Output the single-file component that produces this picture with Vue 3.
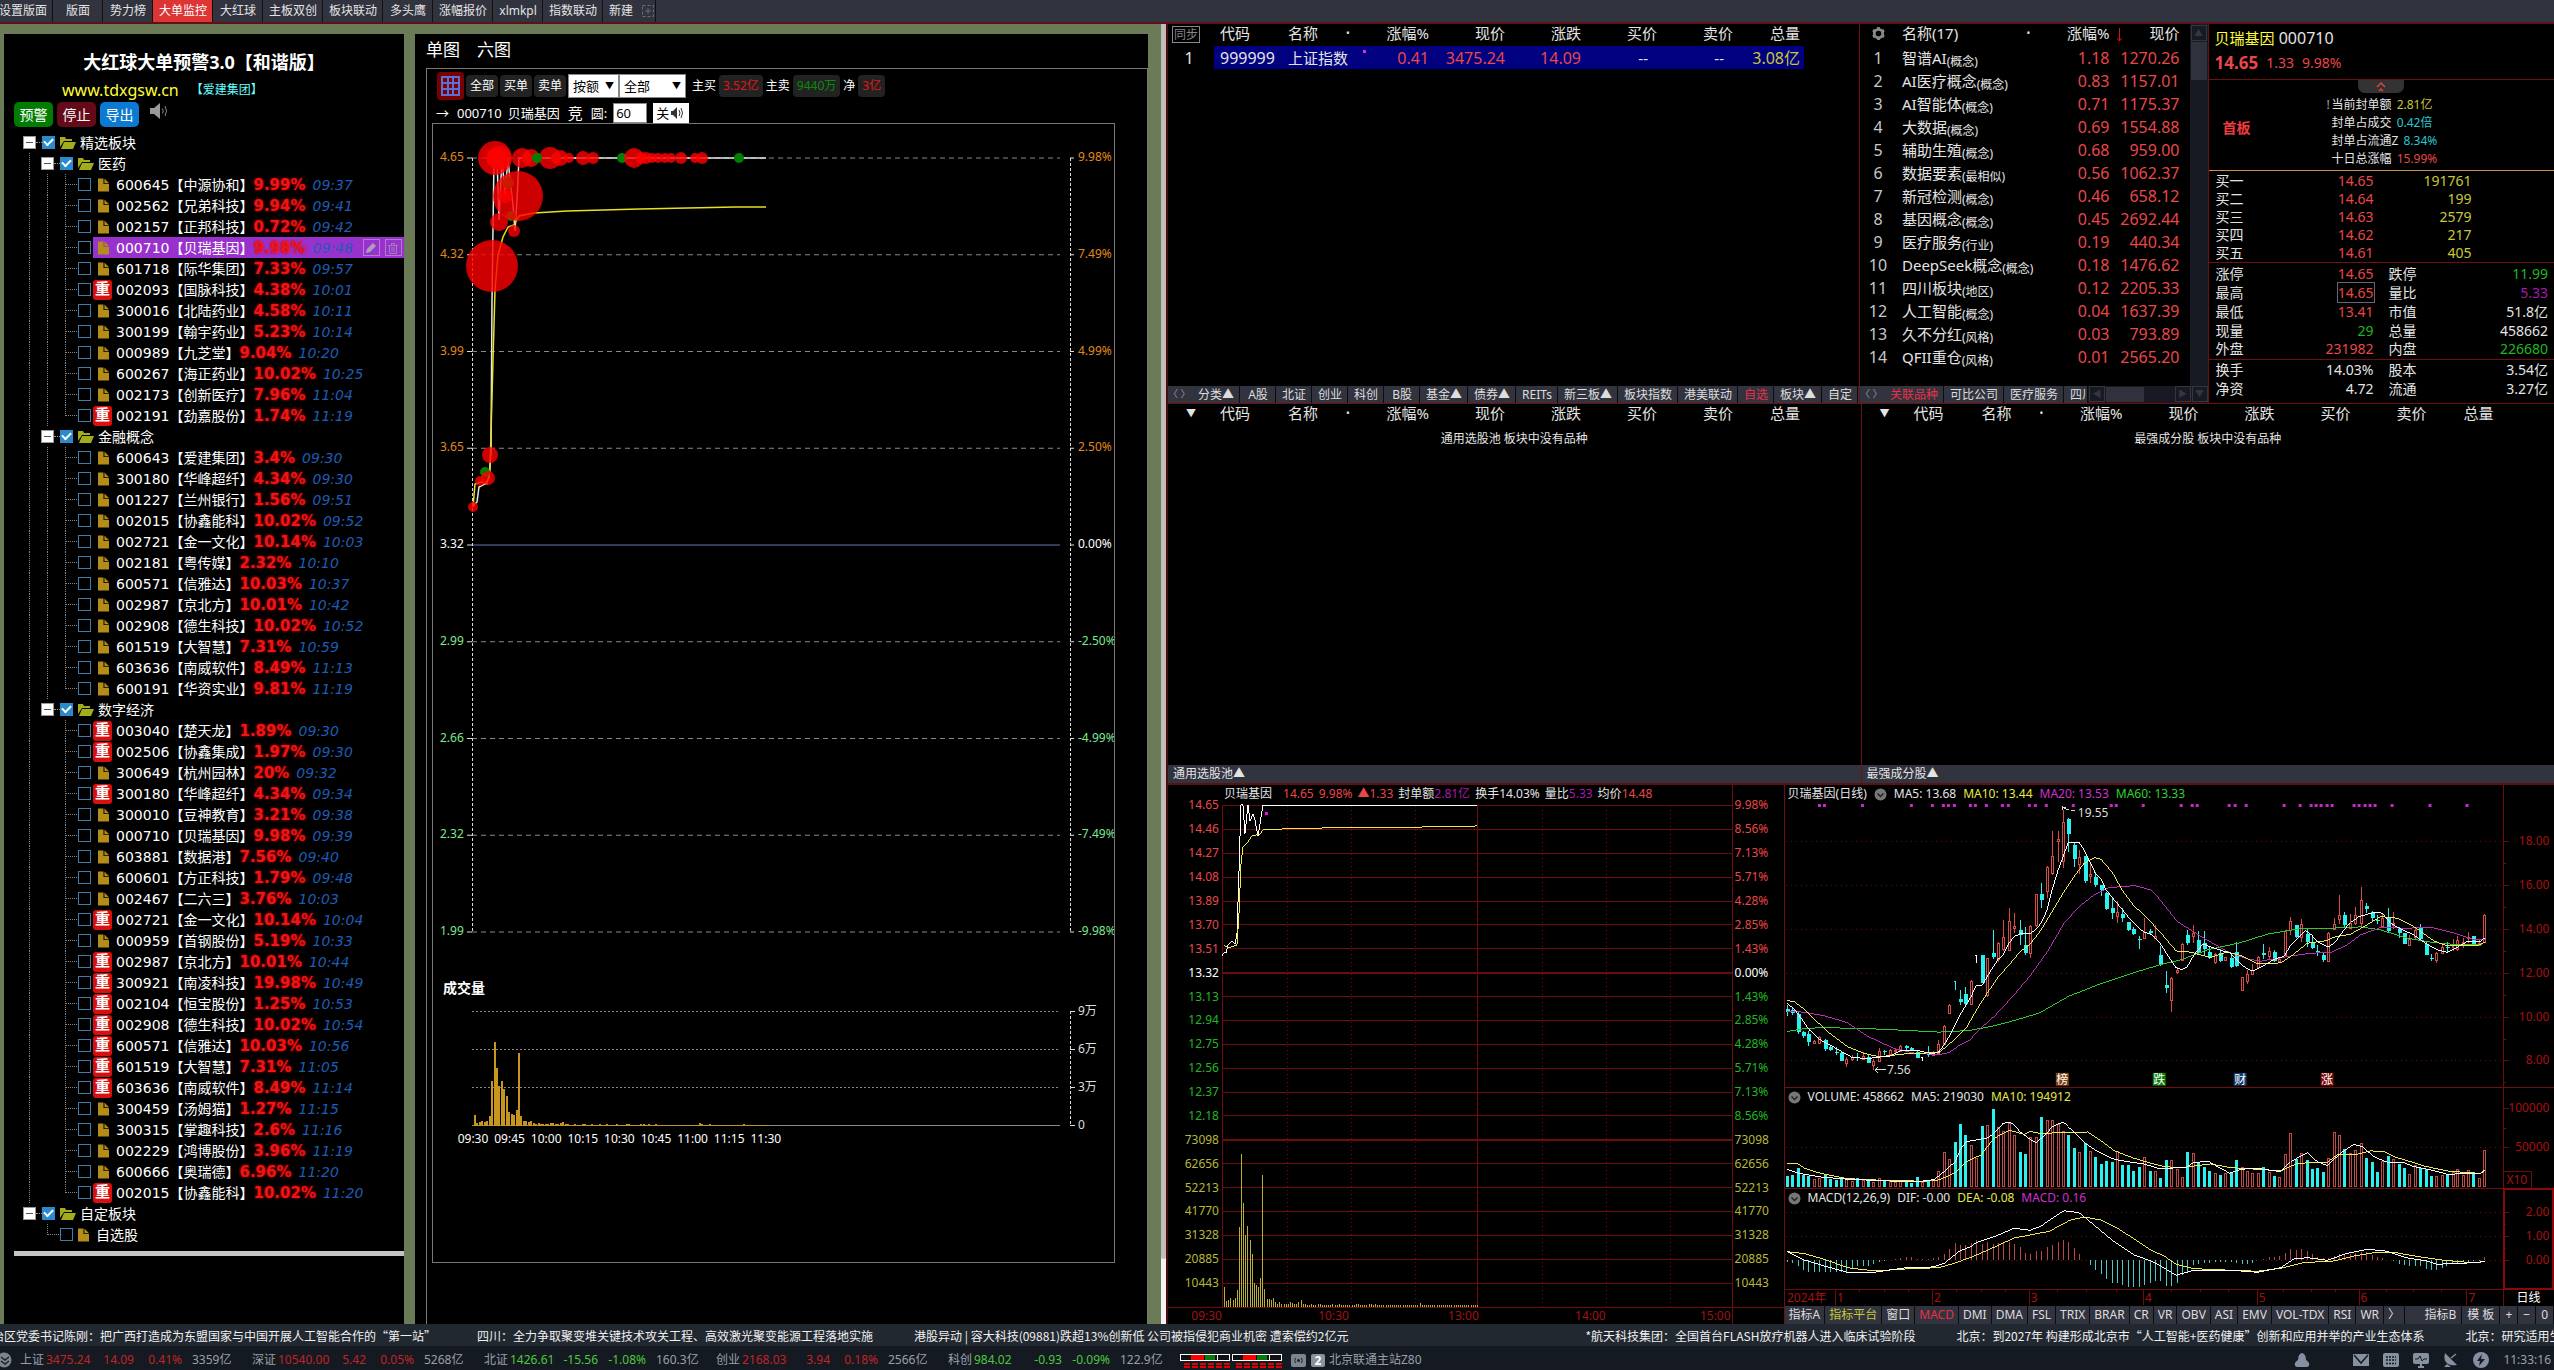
<script setup>
const layoutTabs = ['设置版面', '版面', '势力榜', '大单监控', '大红球', '主板双创', '板块联动', '多头鹰', '涨幅报价', 'xlmkpl', '指数联动']

// A leading * marks a stock that has been flagged before.
const parse = (s) => s.trim().split('\n').map((l) => {
  const [code, name, pct, time] = l.trim().split(' ')
  return { dup: code[0] === '*', code: code.replace('*', ''), name, pct, time }
})
const groups = [
  { name: '医药', items: parse(`600645 中源协和 9.99% 09:37
    002562 兄弟科技 9.94% 09:41
    002157 正邦科技 0.72% 09:42
    000710 贝瑞基因 9.98% 09:48
    601718 际华集团 7.33% 09:57
    *002093 国脉科技 4.38% 10:01
    300016 北陆药业 4.58% 10:11
    300199 翰宇药业 5.23% 10:14
    000989 九芝堂 9.04% 10:20
    600267 海正药业 10.02% 10:25
    002173 创新医疗 7.96% 11:04
    *002191 劲嘉股份 1.74% 11:19`) },
  { name: '金融概念', items: parse(`600643 爱建集团 3.4% 09:30
    300180 华峰超纤 4.34% 09:30
    001227 兰州银行 1.56% 09:51
    002015 协鑫能科 10.02% 09:52
    002721 金一文化 10.14% 10:03
    002181 粤传媒 2.32% 10:10
    600571 信雅达 10.03% 10:37
    002987 京北方 10.01% 10:42
    002908 德生科技 10.02% 10:52
    601519 大智慧 7.31% 10:59
    603636 南威软件 8.49% 11:13
    600191 华资实业 9.81% 11:19`) },
  { name: '数字经济', items: parse(`*003040 楚天龙 1.89% 09:30
    *002506 协鑫集成 1.97% 09:30
    300649 杭州园林 20% 09:32
    *300180 华峰超纤 4.34% 09:34
    300010 豆神教育 3.21% 09:38
    000710 贝瑞基因 9.98% 09:39
    603881 数据港 7.56% 09:40
    600601 方正科技 1.79% 09:48
    002467 二六三 3.76% 10:03
    *002721 金一文化 10.14% 10:04
    000959 首钢股份 5.19% 10:33
    *002987 京北方 10.01% 10:44
    *300921 南凌科技 19.98% 10:49
    *002104 恒宝股份 1.25% 10:53
    *002908 德生科技 10.02% 10:54
    *600571 信雅达 10.03% 10:56
    *601519 大智慧 7.31% 11:05
    *603636 南威软件 8.49% 11:14
    300459 汤姆猫 1.27% 11:15
    300315 掌趣科技 2.6% 11:16
    002229 鸿博股份 3.96% 11:19
    600666 奥瑞德 6.96% 11:20
    *002015 协鑫能科 10.02% 11:20`) },
]

const bigAxis = [
  ['4.65', '9.98%', 'o'], ['4.32', '7.49%', 'o'], ['3.99', '4.99%', 'o'], ['3.65', '2.50%', 'o'], ['3.32', '0.00%', 'w'],
  ['2.99', '-2.50%', 'g'], ['2.66', '-4.99%', 'g'], ['2.32', '-7.49%', 'g'], ['1.99', '-9.98%', 'g'],
].map(([p, r, c], i) => ({ p, r, c, y: 158 + i * 96.75 }))
const bigVolAxis = [['9万', 1011], ['6万', 1049], ['3万', 1087], ['0', 1125]]
const bigTimes = ['09:30', '09:45', '10:00', '10:15', '10:30', '10:45', '11:00', '11:15', '11:30']
const bubbles = [
  [495, 158, 17], [499, 158, 12], [496, 158, 10], [522, 158, 10], [531, 158, 9], [550, 158, 11], [560, 158, 8], [569, 158, 5],
  [583, 158, 7], [593, 158, 6], [634, 158, 10], [641, 158, 6], [646, 158, 6], [652, 158, 5], [658, 158, 5], [665, 158, 5], [671, 158, 5],
  [681, 158, 6], [695, 158, 5], [702, 158, 6], [518, 196, 25], [505, 196, 7], [499, 222, 9], [514, 231, 6], [492, 266, 26],
  [490, 455, 8], [488, 478, 7], [480, 481, 5], [473, 507, 5],
]
const greens = [[537, 158, 5], [527, 158, 5], [622, 158, 5], [556, 158, 5], [739, 158, 5], [485, 472, 5], [508, 183, 6], [511, 216, 5]]

const vol = [51, 14, 18, 23, 18, 23, 44, 206, 393, 267, 183, 208, 172, 136, 62, 56, 50, 74, 339, 46, 19, 19, 16, 23, 11, 6, 13, 7, 8, 8, 8, 12, 10, 8, 7, 13, 18, 6, 6, 4,
  4, 6, 3, 3, 6, 6, 3, 3, 5, 3, 4, 6, 3, 4, 6, 4, 3, 3, 5, 3, 3, 4, 8, 8, 3, 3, 4, 3, 8, 6, 4, 6, 4, 3, 5, 3, 3, 4, 3, 3,
  3, 3, 4, 3, 3, 3, 4, 3, 3, 3, 3, 3, 10, 5, 3, 4, 5, 3, 3, 3, 4, 3, 3, 3, 3, 4, 3, 3, 3, 3, 5, 3, 3, 3, 3, 3, 3, 3, 3, 4]

const poolHead = ['代码', '名称', '涨幅%', '现价', '涨跌', '买价', '卖价', '总量']
const marketTabs = ['分类▲', 'A股', '北证', '创业', '科创', 'B股', '基金▲', '债券▲', 'REITs', '新三板▲', '板块指数', '港美联动', '自选', '板块▲', '自定']
const sectors = [
  ['智谱AI', '概念', '1.18', '1270.26'], ['AI医疗概念', '概念', '0.83', '1157.01'], ['AI智能体', '概念', '0.71', '1175.37'],
  ['大数据', '概念', '0.69', '1554.88'], ['辅助生殖', '概念', '0.68', '959.00'], ['数据要素', '最相似', '0.56', '1062.37'],
  ['新冠检测', '概念', '0.46', '658.12'], ['基因概念', '概念', '0.45', '2692.44'], ['医疗服务', '行业', '0.19', '440.34'],
  ['DeepSeek概念', '概念', '0.18', '1476.62'], ['四川板块', '地区', '0.12', '2205.33'], ['人工智能', '概念', '0.04', '1637.39'],
  ['久不分红', '风格', '0.03', '793.89'], ['QFII重仓', '风格', '0.01', '2565.20'],
]
const sealStats = [['当前封单额', '2.81亿', 'y'], ['封单占成交', '0.42倍', 'c'], ['封单占流通Z', '8.34%', 'c'], ['十日总涨幅', '15.99%', 'r']]
const bids = [['买一', '14.65', '191761'], ['买二', '14.64', '199'], ['买三', '14.63', '2579'], ['买四', '14.62', '217'], ['买五', '14.61', '405']]
const stats = [
  ['涨停', '14.65', 'r', '跌停', '11.99', 'g'], ['最高', '14.65', 'r boxed', '量比', '5.33', 'm'], ['最低', '13.41', 'r', '市值', '51.8亿', 'w'],
  ['现量', '29', 'g', '总量', '458662', 'w'], ['外盘', '231982', 'r', '内盘', '226680', 'g'],
]
const stats2 = [['换手', '14.03%', 'w', '股本', '3.54亿', 'w'], ['净资', '4.72', 'w', '流通', '3.27亿', 'w']]

const intraLeft = ['14.65', '14.46', '14.27', '14.08', '13.89', '13.70', '13.51', '13.32', '13.13', '12.94', '12.75', '12.56', '12.37', '12.18', '73098', '62656', '52213', '41770', '31328', '20885', '10443']
const intraRight = ['9.98%', '8.56%', '7.13%', '5.71%', '4.28%', '2.85%', '1.43%', '0.00%', '1.43%', '2.85%', '4.28%', '5.71%', '7.13%', '8.56%']
const intraAxis = intraLeft.map((l, i) => ({ l, r: intraRight[i] || l, y: 805.5 + i * 23.9, c: i < 7 ? 'r' : i === 7 ? 'w' : i < 14 ? 'g' : 'y' }))
const intraDots = [1287.5, 1351.5, 1415.5, 1542.5, 1606.5, 1670.5]
const intraTimes = [['09:30', 1222], ['10:30', 1349], ['13:00', 1479], ['14:00', 1606], ['15:00', 1731]]

// Daily chart: coordinates are kept in thirds of a pixel from the plot origin.
const X = (v) => 1780 + v / 3
const Y = (v) => 780 + v / 3
const line = (s) => s.split(' ').map((p) => { const [a, b] = p.split(','); return X(+a).toFixed(1) + ',' + Y(+b).toFixed(1) }).join(' ')
const cx = (i) => Math.floor(1786.3 + 5.414 * i) + 0.5
const candles = `d675,687,697,708 d682,690,700,706 d695,703,756,762 d752,757,768,775 d752,762,786,798 u779,784,789,793 u768,772,788,790 d778,781,806,812 d795,801,809,812 d802,815,817,825 d812,819,842,843 u830,838,850,860 u825,830,838,842 d818,830,832,842 u815,827,838,841 d826,832,849,850 u838,844,854,870 u804,812,842,844 d810,814,817,825 u808,811,822,824 u806,809,814,818 u795,799,812,815 d795,798,803,810 d800,804,812,814 d810,815,833,834 w832,832,832,842 d798,820,826,832 u812,815,826,828 u780,792,820,826 u735,737,791,793 u672,674,698,702 t604,604,604,630 d630,657,666,675 d620,643,671,678 u600,602,673,675 w526,526,526,549 d525,525,608,610 u533,535,645,650 d450,518,530,537 u486,488,536,545 u420,472,508,514 u385,423,510,512 u398,438,443,458 d420,450,465,495 d440,495,519,526 u435,437,520,533 u341,343,435,440 d310,341,360,384 u258,260,332,355 u153,229,280,284 u153,178,184,246 u90,127,242,263 d113,117,162,216 d185,195,237,262 u210,232,252,282 d228,228,303,308 u250,283,289,310 d275,291,315,322 d315,316,330,348 d337,339,387,390 d350,384,398,418 u362,397,409,428 d385,402,413,425 d425,425,450,452 d440,447,463,466 d468,477,480,507 u415,457,474,478 d448,452,459,463 u435,468,474,478 d498,525,555,558 d573,614,625,638 u590,595,660,695 u560,570,576,582 u490,493,540,542 d450,465,489,496 u435,459,467,488 d452,480,519,525 d452,490,508,525 d500,516,535,538 u520,523,545,551 d508,518,543,545 u530,532,540,542 d522,535,561,564 d486,516,558,561 u590,592,629,631 u570,583,602,612 u551,570,583,586 u528,530,561,566 d492,520,524,538 u500,514,528,540 d510,516,544,547 u533,537,543,546 u450,452,524,526 u410,424,450,465 d435,436,470,474 u417,433,470,486 d448,461,485,500 d470,487,504,508 d495,512,520,528 d515,525,541,546 u456,458,542,544 u415,432,446,449 u345,406,416,432 d396,404,436,442 u402,430,445,448 u380,405,430,435 u321,360,428,440 d369,377,387,398 d393,396,414,424 d405,419,424,432 u398,414,437,440 d384,414,453,460 u396,430,434,448 d440,444,460,474 d458,460,491,492 u465,478,494,496 u445,450,470,478 d432,445,477,482 d485,492,524,526 d522,535,538,543 u515,518,541,549 u496,500,518,521 d485,500,504,518 u477,492,502,512 u468,480,508,513 u475,485,488,505 u456,470,474,490 d467,468,495,497 u480,490,494,498 u402,404,485,487`
  .split(' ').map((s, i) => { const [h, t, b, l] = s.slice(1).split(',').map((n) => Math.round(Y(+n))); return { k: s[0], x: cx(i), h, t, b, l } })
const dayVol = [1187, 1185, 1163, 1185, 1188, 1197, 1194, 1183, 1197, 1201, 1197, 1193, 1202, 1194, 1201, 1199, 1205, 1194, 1203, 1203, 1206, 1204, 1205, 1208, 1191, 1207, 1203, 1200, 1173, 1117, 1138, 1086, 1032, 1065, 1095, 1134, 1038, 1036, 987, 1040, 1052, 1028, 1066, 1116, 1121, 1072, 1070, 1011, 1020, 1020, 1032, 1052, 1065, 1104, 1117, 1089, 1114, 1131, 1152, 1144, 1146, 1113, 1155, 1155, 1173, 1161, 1130, 1173, 1173, 1194, 1140, 1141, 1167, 1192, 1116, 1120, 1148, 1161, 1173, 1180, 1186, 1178, 1180, 1140, 1160, 1173, 1179, 1180, 1160, 1177, 1188, 1192, 1123, 1060, 1138, 1120, 1141, 1167, 1164, 1176, 1135, 1057, 1066, 1107, 1120, 1110, 1090, 1134, 1147, 1176, 1144, 1128, 1136, 1152, 1164, 1183, 1154, 1165, 1167, 1188, 1189, 1184, 1186, 1175, 1168, 1186, 1171, 1179, 1195, 1110]
  .map((v, i) => ({ x: cx(i), y: Math.round(Y(v)), up: 'uw'.includes(candles[i].k) }))
const macd = [-4, -8, -18, -28, -34, -34, -34, -34, -34, -34, -34, -34, -26, -18, -17, -17, -12, -5, -1, 0, 4, 8, 10, 9, 5, 4, 4, 7, 10, 18, 34, 52, 47, 45, 52, 60, 50, 55, 50, 52, 54, 55, 49, 40, 22, 20, 28, 27, 40, 45, 54, 60, 55, 36, 18, 0, -14, -28, -40, -55, -67, -68, -75, -79, -79, -79, -75, -68, -61, -62, -76, -76, -67, -45, -34, -14, -10, -8, -7, -4, -4, -4, -4, -7, -10, -10, -8, 0, 4, 9, 10, 12, 23, 34, 32, 34, 28, 18, 10, 6, 8, 14, 20, 18, 18, 22, 25, 24, 15, 10, 6, 1, -3, -10, -14, -18, -16, -18, -26, -28, -28, -24, -16, -10, -7, -6, -4, -3, -3, 9]
  .map((v, i) => ({ x: cx(i), v, y: Y(1441 - v) }))
const ma5 = line('19,672 37,685 52,703 85,750 118,780 166,806 214,833 262,836 295,832 328,829 361,812 409,812 457,822 475,815 490,795 505,770 538,705 571,650 586,617 604,616 619,590 652,538 667,525 685,490 700,470 718,462 748,462 766,447 781,430 799,390 814,330 832,270 847,230 862,188 895,187 913,215 943,278 961,297 976,330 1009,370 1042,410 1075,445 1090,457 1110,463 1135,485 1160,525 1186,563 1202,569 1220,560 1240,525 1267,492 1300,505 1350,520 1390,560 1414,574 1445,560 1480,538 1510,530 1528,500 1560,465 1576,452 1593,465 1610,485 1645,502 1665,485 1690,450 1710,428 1735,410 1786,396 1805,400 1830,430 1860,447 1900,465 1930,487 1970,510 2000,517 2030,502 2060,485 2100,485 2113,474')
const ma10 = line('19,663 37,664 60,680 100,718 148,762 199,800 247,820 295,831 376,822 475,818 520,780 556,745 586,692 619,640 652,592 685,555 718,515 748,493 781,450 814,395 847,340 880,290 910,250 943,233 961,238 995,278 1024,330 1060,378 1090,405 1123,440 1150,470 1186,513 1230,517 1290,533 1340,516 1380,527 1430,552 1500,549 1530,530 1580,490 1640,482 1660,472 1710,463 1750,440 1800,410 1850,415 1900,440 1960,483 2000,498 2090,498 2113,487')
const ma20 = line('19,695 70,697 130,708 199,728 262,770 340,806 400,820 475,824 505,818 538,795 565,782 600,745 640,710 700,645 748,588 800,515 850,430 895,380 940,345 985,323 1062,317 1110,330 1130,350 1190,425 1270,475 1340,515 1400,537 1440,544 1520,530 1590,520 1650,518 1700,495 1740,465 1800,443 1880,445 1950,442 2010,457 2060,474 2085,480 2113,478')
const ma60 = line('19,755 70,746 130,743 230,746 300,748 475,757 565,752 640,738 700,722 775,700 862,650 950,615 1060,578 1140,554 1200,540 1280,510 1380,488 1460,463 1560,446 1650,445 1740,441 1800,450 1880,475 1960,488 2030,494 2100,494 2113,487')
const vma5 = line('19,1168 52,1180 118,1191 199,1198 300,1202 394,1206 430,1203 460,1199 490,1175 523,1145 538,1110 556,1085 619,1074 637,1062 667,1030 685,1027 700,1034 718,1056 748,1078 766,1088 799,1060 814,1040 845,1027 862,1040 895,1072 913,1090 943,1110 1000,1138 1060,1148 1090,1152 1138,1167 1190,1163 1215,1163 1240,1147 1285,1145 1310,1160 1347,1180 1380,1168 1430,1165 1500,1175 1530,1145 1580,1118 1610,1145 1640,1157 1680,1120 1720,1093 1745,1100 1780,1130 1820,1147 1870,1148 1900,1160 1960,1172 2000,1183 2100,1180 2113,1172')
const vma10 = line('19,1152 52,1152 70,1165 118,1180 199,1196 300,1201 430,1204 475,1200 523,1178 556,1145 600,1125 640,1075 685,1051 730,1063 748,1054 775,1060 860,1058 920,1056 961,1082 1000,1112 1060,1135 1110,1150 1150,1160 1200,1163 1290,1152 1350,1163 1430,1168 1500,1173 1550,1150 1640,1147 1670,1125 1730,1123 1770,1113 1810,1114 1840,1130 1890,1145 1930,1158 2000,1173 2060,1178 2100,1180 2113,1170')
const dif = line('19,1415 70,1440 130,1458 199,1477 280,1477 376,1463 457,1461 490,1450 538,1412 571,1400 586,1388 640,1370 700,1345 748,1351 781,1338 814,1315 850,1292 895,1298 940,1335 1000,1385 1060,1425 1110,1443 1140,1458 1186,1486 1240,1471 1350,1471 1430,1477 1500,1463 1540,1437 1580,1433 1640,1441 1700,1420 1760,1408 1820,1414 1880,1434 1940,1443 1970,1453 2040,1450 2090,1448 2113,1443')
const dea = line('19,1415 70,1421 130,1438 199,1463 280,1473 376,1467 475,1463 520,1450 571,1432 640,1402 700,1374 800,1355 862,1322 910,1311 960,1320 1010,1345 1062,1378 1110,1410 1150,1428 1186,1453 1240,1466 1350,1471 1430,1474 1500,1465 1570,1448 1660,1443 1720,1428 1780,1418 1850,1419 1920,1431 1990,1441 2060,1447 2090,1449 2113,1444')
const newsDots = [115, 130, 244, 391, 454, 487, 502, 520, 568, 583, 616, 664, 682, 745, 763, 796, 877, 991, 1006, 1087, 1201, 1234, 1249, 1345, 1363, 1396, 1510, 1558, 1591, 1606, 1621, 1639, 1654, 1720, 1735, 1753, 1768, 1783, 1834, 1948, 2059].map((v) => Math.round(X(v)) - 1)
const priceAxis = ['18.00', '16.00', '14.00', '12.00', '10.00', '8.00'].map((t, i) => ({ t, y: Math.round(841.3 + i * 43.8) + 0.5 }))
const marks = [['榜', 2055, '#7a420e'], ['跌', 2152, '#0a7a0a'], ['财', 2233, '#12396b'], ['涨', 2320, '#7a0c0c']]
const months = [['1', 1834], ['2', 1931], ['3', 2028], ['4', 2142], ['5', 2256], ['6', 2358], ['7', 2466]]
const shortTicks = [1858, 1883, 1907, 1955, 1980, 2004, 2056, 2085, 2115, 2170, 2199, 2227, 2282, 2310, 2334, 2385, 2412, 2440]
const indTabs = ['指标A', '指标平台', '窗口', 'MACD', 'DMI', 'DMA', 'FSL', 'TRIX', 'BRAR', 'CR', 'VR', 'OBV', 'ASI', 'EMV', 'VOL-TDX', 'RSI', 'WR', '〉']
const indTabsRight = ['指标B', '模 板', '+', '−', '0']

const news = [
  '治区党委书记陈刚：把广西打造成为东盟国家与中国开展人工智能合作的“第一站”',
  '四川：全力争取聚变堆关键技术攻关工程、高效激光聚变能源工程落地实施',
  '港股异动 | 容大科技(09881)跌超13%创新低 公司被指侵犯商业机密 遭索偿约2亿元',
  '*航天科技集团：全国首台FLASH放疗机器人进入临床试验阶段',
  '北京：到2027年 构建形成北京市“人工智能+医药健康”创新和应用并举的产业生态体系',
  '北京：研究适用生',
]
const indices = [
  ['上证', '3475.24', '14.09', '0.41%', '3359亿', 'up'], ['深证', '10540.00', '5.42', '0.05%', '5268亿', 'up'],
  ['北证', '1426.61', '-15.56', '-1.08%', '160.3亿', 'dn'], ['创业', '2168.03', '3.94', '0.18%', '2566亿', 'up'],
  ['科创', '984.02', '-0.93', '-0.09%', '122.9亿', 'dn'],
]
</script>

<template>
  <div class="app">
    <nav class="top-tabs">
      <button v-for="t in layoutTabs" :key="t" :class="{ on: t === '大单监控' }">{{ t }}</button>
      <button class="new-tab">新建
        <svg width="14" height="14" viewBox="0 0 14 14" fill="none" stroke="#6a6d79"><rect x="1.500" y="1.500" width="11" height="11" stroke-dasharray="3 2" /><path d="M7 4v6M4 7h6" /></svg>
      </button>
    </nav>

    <main class="main">
      <div class="board">
        <aside class="tree-panel">
          <h1>大红球大单预警3.0【和谐版】</h1>
          <p class="site"><a href="#">www.tdxgsw.cn</a><span>【爱建集团】</span></p>
          <div class="actions">
            <button class="b-green">预警</button><button class="b-red">停止</button><button class="b-blue">导出</button>
            <svg width="20" height="18" viewBox="0 0 20 18"><path d="M1 6h4l6-5v16l-6-5H1z" fill="#9a9a9a" /><path d="M13.500 6.500q1.500 2.500 0 5M16 4q3 5 0 10" fill="none" stroke="#8a8a8a" /></svg>
          </div>
          <ul class="tree">
            <li class="row root">
              <button class="exp" aria-label="折叠"></button><i class="dash"></i>
              <label><input type="checkbox" checked><svg class="folder" viewBox="0 0 16 13"><path d="M0 11V1h5l1 2h6v2H4z" /><path d="M4 6h12l-3 7H1z" /></svg><span>精选板块</span></label>
            </li>
            <template v-for="(g, gi) in groups" :key="g.name">
              <li class="row">
                <i class="g first-g short-g"></i>
                <button class="exp" aria-label="折叠"></button><i class="dash"></i>
                <label><input type="checkbox" checked><svg class="folder" viewBox="0 0 16 13"><path d="M0 11V1h5l1 2h6v2H4z" /><path d="M4 6h12l-3 7H1z" /></svg><span>{{ g.name }}</span></label>
              </li>
              <li v-for="(s, i) in g.items" :key="s.code" class="row leaf">
                <i class="g first-g"></i><i class="g" :class="{ none: gi === 2 }"></i><i class="g arm" :class="{ last: i === g.items.length - 1 }"></i>
                <label :class="{ sel: gi === 0 && i === 3 }">
                  <input type="checkbox">
                  <span class="body">
                    <b v-if="s.dup" class="dup">重</b>
                    <svg v-else class="file" viewBox="0 0 12 14"><path d="M0 0h6v6h6v8H0z" /><path d="M7 0l5 5H7z" /></svg>
                    <span class="code">{{ s.code }}【{{ s.name }}】</span><b class="pct">{{ s.pct }}</b><em>{{ s.time }}</em>
                  </span>
                </label>
                <span v-if="gi === 0 && i === 3" class="edit">
                  <button aria-label="编辑"><svg viewBox="0 0 14 14"><path d="M2 12l1-4 6-6 3 3-6 6z" fill="#a9a0c0" /></svg></button>
                  <button aria-label="删除"><svg viewBox="0 0 14 14" fill="none" stroke="#a080b8"><path d="M2 4.500h10M5.500 4V2.500h3V4M3.500 4.500v8h7v-8M6 6v5M8 6v5" /></svg></button>
                </span>
              </li>
            </template>
            <li class="row root">
              <button class="exp" aria-label="折叠"></button><i class="dash"></i>
              <label><input type="checkbox" checked><svg class="folder" viewBox="0 0 16 13"><path d="M0 11V1h5l1 2h6v2H4z" /><path d="M4 6h12l-3 7H1z" /></svg><span>自定板块</span></label>
            </li>
            <li class="row">
              <i class="g first-g none"></i><i class="g arm last"></i>
              <label><input type="checkbox"><svg class="file" viewBox="0 0 12 14"><path d="M0 0h6v6h6v8H0z" /><path d="M7 0l5 5H7z" /></svg><span>自选股</span></label>
            </li>
          </ul>
          <div class="hbar"></div>
        </aside>

        <section class="order-panel">
          <div class="mode"><a href="#">单图</a><a href="#">六图</a></div>
          <div class="frame">
            <div class="tools">
              <button class="grid-btn" aria-label="表格"><svg width="19" height="20" viewBox="0 0 19 20" fill="none" stroke="#5a70d8" stroke-width="2"><rect x="1" y="1" width="17" height="18" /><path d="M1 7h17M1 13h17M7 1v18M12 1v18" /></svg></button>
              <button>全部</button><button>买单</button><button>卖单</button>
              <span class="sel-wrap w1"><select aria-label="方式"><option>按额</option></select></span><span class="sel-wrap w2"><select aria-label="范围"><option>全部</option></select></span>
              <span class="tag">主买</span><b class="pill red">3.52亿</b><span class="tag">主卖</span><b class="pill green">9440万</b><span class="tag">净</span><b class="pill red">3亿</b>
            </div>
            <div class="tools2">
              <span class="arrow">→</span><span>000710</span><span>贝瑞基因</span><span class="jing">竞</span>
              <label for="circle">圆:</label><input id="circle" type="text" value="60">
              <button>关<svg width="14" height="12" viewBox="0 0 14 12"><path d="M0 4h2l4-4v12L2 8H0z" fill="#333" /><path d="M8 3q2 3 0 6M10 1q3 5 0 10" stroke="#333" fill="none" /></svg></button>
            </div>
            <div class="plot">
              <svg viewBox="433 124 681 1138">
                <g stroke="#8a8a8a">
                  <template v-for="a in bigAxis" :key="a.p">
                    <line x1="472" :x2="1060" :y1="a.y" :y2="a.y" :stroke-dasharray="a.c === 'w' ? '' : '5 4'" :stroke="a.c === 'w' ? '#5a7ab0' : '#888'" />
                    <path :d="`M467 ${a.y}h5M1070 ${a.y}h4`" stroke="#ddd" />
                  </template>
                  <path d="M472.500 158V932M1070.500 158V932M1070.500 1011V1126" stroke="#ddd" stroke-dasharray="3 2" />
                  <template v-for="v in bigVolAxis" :key="v[0]">
                    <path :d="`M472 ${v[1]}.500H1060`" :stroke-dasharray="v[0] === '0' ? '' : '2 2'" />
                    <path :d="`M1070 ${v[1]}.500h5`" stroke="#ddd" />
                  </template>
                </g>
                <g v-for="a in bigAxis" :key="a.p" :class="'ax-' + a.c">
                  <text x="440" :y="a.y + 3">{{ a.p }}</text><text x="1078" :y="a.y + 3">{{ a.r }}</text>
                </g>
                <g fill="#c8961e" shape-rendering="crispEdges"><rect v-for="(v, i) in vol" :key="i" :x="474 + i * 2.446" :y="1125.5 - v * 0.2137" width="2" :height="v * 0.2137" /></g>
                <text v-for="v in bigVolAxis" :key="v[0]" x="1078" :y="v[1] + 4" fill="#ddd">{{ v[0] }}</text>
                <text x="443" y="993" class="vol-title">成交量</text>
                <text v-for="(t, i) in bigTimes" :key="t" :x="473 + i * 36.6" y="1143" text-anchor="middle" fill="#fff">{{ t }}</text>
                <g fill="none" stroke-width="1.500">
                  <polyline stroke="#e8e8e8" points="473,506 477,502 479,487 485,484 489,478 491,452 492,300 494,158 497,158 499,220 502,158 505,195 508,158 510,180 513,205 515,231 517,200 519,158 766,158" />
                  <polyline stroke="#e8e020" points="473,507 475,484 481,482 487,484 490,470 493,360 495,290 498,255 503,237 508,227 514,225 519,216 534,213 567,211 640,209 735,207 766,207" />
                </g>
                <g fill="#008000"><circle v-for="(b, i) in greens" :key="i" :cx="b[0]" :cy="b[1]" :r="b[2]" /></g>
                <g fill="#ff0000" fill-opacity=".8"><circle v-for="(b, i) in bubbles" :key="i" :cx="b[0]" :cy="b[1]" :r="b[2]" /></g>
                <circle cx="537" cy="158" r="5" fill="#008000" />
              </svg>
            </div>
          </div>
        </section>
      </div>
      <div class="vscroll"><i></i></div>

      <div class="quotes">
        <div class="top-row">
          <section class="watch">
            <table class="pool">
              <colgroup><col class="c46"><col class="c68"><col class="c64"><col class="c24"><col class="c63"><col class="c76"><col class="c76"><col class="c76"><col class="c76"><col class="c67"><col></colgroup>
              <thead><tr><th><button class="sync">同步</button></th><th class="l">代码</th><th class="l">名称</th><th class="dot">•</th><th>涨幅%</th><th>现价</th><th>涨跌</th><th>买价</th><th>卖价</th><th>总量</th><th></th></tr></thead>
              <tbody><tr><td class="idx">1</td><td class="l num">999999</td><td class="l nm">上证指数</td><td class="flag"><i></i></td><td class="num r">0.41</td><td class="num r">3475.24</td><td class="num r">14.09</td><td class="na">--</td><td class="na">--</td><td class="num y">3.08亿</td><td></td></tr></tbody>
            </table>
            <div class="strip"><span class="nav">〈 〉</span><button v-for="t in marketTabs" :key="t" :class="{ hot: t === '自选' }">{{ t }}</button></div>
          </section>

          <section class="related">
            <div class="rel-body">
              <table class="sectors">
                <colgroup><col class="c36"><col><col class="c24"><col class="c63"><col class="c76"></colgroup>
                <thead><tr>
                  <th class="c"><svg width="15" height="15" viewBox="-8 -8 16 16"><circle r="4.500" fill="none" stroke="#888" stroke-width="3" /><g stroke="#888" stroke-width="3"><path d="M0-7v2M0 5v2M-6-3.500l2 1M4 2.500l2 1M-6 3.500l2-1M4-2.500l2-1" /></g></svg></th>
                  <th class="l">名称(17)</th><th class="dot">•</th><th>涨幅%<svg class="sort" width="7" height="14" viewBox="0 0 7 14" fill="none" stroke="#e01010"><path d="M3.500 0v13M1 10l2.500 3L6 10" /></svg></th><th>现价</th>
                </tr></thead>
                <tbody><tr v-for="(s, i) in sectors" :key="s[0]"><td class="c num">{{ i + 1 }}</td><td class="l nm" colspan="2">{{ s[0] }}<small>({{ s[1] }})</small></td><td class="num r">{{ s[2] }}</td><td class="num r">{{ s[3] }}</td></tr></tbody>
              </table>
              <div class="sb-v"><i class="btn">▲</i><i class="thumb"></i></div>
            </div>
            <div class="strip">
              <span class="nav">〈 〉</span><button class="hot">关联品种</button><button>可比公司</button><button>医疗服务</button><button class="cut">四川</button>
              <div class="sb-h"><i class="btn">◀</i><i class="thumb"></i><i class="btn end">▶</i><i class="btn">▼</i></div>
            </div>
          </section>

          <section class="quote">
            <header>
              <p class="q-name"><b>贝瑞基因</b> 000710</p>
              <p class="q-price"><strong>14.65</strong><span>1.33</span><span>9.98%</span></p>
            </header>
            <div class="seal">
              <button class="fold" aria-label="收起"><svg width="12" height="10" viewBox="0 0 12 10" fill="none" stroke="#e04040" stroke-width="1.500"><path d="M2 5l4-4 4 4M4 9l2-2 2 2" /></svg></button>
              <strong>首板</strong>
              <ul><li v-for="(s, i) in sealStats" :key="s[0]"><i v-if="i === 0">!</i>{{ s[0] }} <span :class="s[2]">{{ s[1] }}</span></li></ul>
            </div>
            <table class="bids"><tbody><tr v-for="b in bids" :key="b[0]"><th>{{ b[0] }}</th><td class="r">{{ b[1] }}</td><td class="y">{{ b[2] }}</td><td></td></tr></tbody></table>
            <table class="stats"><tbody><tr v-for="s in stats" :key="s[0]"><th>{{ s[0] }}</th><td><span :class="s[2]">{{ s[1] }}</span></td><th class="second">{{ s[3] }}</th><td><span :class="s[5]">{{ s[4] }}</span></td></tr></tbody></table>
            <table class="stats"><tbody><tr v-for="s in stats2" :key="s[0]"><th>{{ s[0] }}</th><td><span :class="s[2]">{{ s[1] }}</span></td><th class="second">{{ s[3] }}</th><td><span :class="s[5]">{{ s[4] }}</span></td></tr></tbody></table>
          </section>
        </div>

        <div class="mid-row">
          <section v-for="n in ['通用选股池', '最强成分股']" :key="n">
            <table class="pool">
              <colgroup><col class="c46"><col class="c68"><col class="c64"><col class="c24"><col class="c63"><col class="c76"><col class="c76"><col class="c76"><col class="c76"><col class="c67"><col></colgroup>
              <thead><tr><th class="down">▼</th><template v-for="(h, i) in poolHead" :key="h"><th :class="{ l: i < 2 }">{{ h }}</th><th v-if="i === 1" class="dot">•</th></template><th></th></tr></thead>
            </table>
            <p class="empty">{{ n }} 板块中没有品种</p>
            <div class="cap">{{ n }}▲</div>
          </section>
        </div>

        <div class="charts">
          <section class="intra">
            <header><span>贝瑞基因</span><span class="r gap">14.65</span><span class="r">9.98%</span><span class="r">▲1.33</span><span>封单额<i class="m">2.81亿</i></span><span>换手14.03%</span><span>量比<i class="m">5.33</i></span><span>均价<i class="r">14.48</i></span></header>
            <svg viewBox="1168 803 616 521">
              <g stroke="#6e0c0c" fill="none" shape-rendering="crispEdges">
                <path v-for="a in intraAxis" :key="a.y" :d="`M1222 ${a.y}H1733`" :stroke-width="a.l === '13.32' || a.l === '73098' ? 2 : 1" />
                <path v-for="x in intraDots" :key="x" :d="`M${x} 806V1307`" stroke-dasharray="1 3" />
                <path d="M1222.500 806V1307M1477.500 806V1307M1732.500 785V1324M1168 1307.500H1784" />
              </g>
              <g v-for="a in intraAxis" :key="a.y" :class="'f-' + a.c"><text x="1219" :y="a.y + 4" text-anchor="end">{{ a.l }}</text><text x="1735" :y="a.y + 4">{{ a.r }}</text></g>
              <text v-for="t in intraTimes" :key="t[0]" :x="t[1]" y="1320" text-anchor="end" fill="#a01414">{{ t[0] }}</text>
              <g fill="#b8b030" shape-rendering="crispEdges"><rect v-for="(v, i) in vol" :key="i" :x="Math.round(1224 + i * 2.125)" :y="1307 - v / 2.57" width="1" :height="v / 2.57" /></g>
              <g fill="none" shape-rendering="crispEdges">
                <polyline stroke="#fff" points="1222,956 1224,953 1226,953 1228,945 1232,941 1235,944 1237,935 1239,873 1240,838 1241,805 1243,805 1245,834 1248,805 1250,821 1253,814 1255,820 1258,836 1261,818 1263,805.500 1477,805.500" />
                <polyline stroke="#f0e848" points="1224,945 1228,948 1237,945 1239,915 1241,865 1243,847 1248,842 1252,836 1260,834 1263,830 1283,829 1323,828 1425,827 1477,826" />
              </g>
              <rect x="1265" y="812" width="3" height="3" fill="#f0f" />
            </svg>
          </section>

          <section class="daily">
            <header><span>贝瑞基因(日线)</span><svg width="13" height="13" viewBox="0 0 13 13"><circle cx="6.500" cy="6.500" r="6" fill="#777" /><path d="M3.500 5.500l3 3 3-3" fill="none" stroke="#222" stroke-width="1.500" /></svg><span>MA5: 13.68</span><span class="yy">MA10: 13.44</span><span class="mm">MA20: 13.53</span><span class="gg">MA60: 13.33</span></header>
            <svg viewBox="1784 803 770 284">
              <g stroke="#6e0c0c" fill="none" shape-rendering="crispEdges">
                <template v-for="a in priceAxis" :key="a.t"><path :d="`M1785 ${a.y}H2503`" stroke-dasharray="1 4" /><path :d="`M2504 ${a.y}h5M2504 ${a.y + 22}h2`" /></template>
                <path d="M2503.500 785V1088" />
              </g>
              <text v-for="a in priceAxis" :key="a.t" x="2549" :y="a.y + 4" text-anchor="end" fill="#a81010">{{ a.t }}</text>
              <rect v-for="x in newsDots" :key="x" :x="x" y="804" width="3" height="3" fill="#c828c8" />
              <g v-for="(c, i) in candles" :key="i" shape-rendering="crispEdges">
                <template v-if="c.k === 'd'"><path :d="`M${c.x} ${c.h}V${c.l}`" stroke="#2af0f0" /><rect :x="c.x - 1.5" :y="c.t" width="4" :height="Math.max(1, c.b - c.t)" fill="#2af0f0" /></template>
                <template v-else-if="c.k === 'u'"><path :d="`M${c.x} ${c.h}V${c.t}M${c.x} ${c.b}V${c.l}`" stroke="#d84c48" /><rect :x="c.x - 1" :y="c.t + 0.5" width="2" :height="Math.max(1, c.b - c.t)" stroke="#d84c48" fill="#000" /></template>
                <path v-else :d="`M${c.x - 1.5} ${c.h + 0.5}h2V${c.l}`" fill="none" :stroke="c.k === 'w' ? '#fff' : '#2af0f0'" />
              </g>
              <g fill="none" shape-rendering="crispEdges">
                <polyline :points="ma60" stroke="#30c830" /><polyline :points="ma20" stroke="#b830b8" /><polyline :points="ma10" stroke="#f0e858" /><polyline :points="ma5" stroke="#fff" />
                <path d="M2062 806v4M2062 808l3 -1M2063 808l5 2M2070 811h4M1874 1070h11M1874 1070l3 -3M1874 1070l3 3" stroke="#ddd" />
              </g>
              <text x="2077" y="817" fill="#ddd">19.55</text><text x="1886" y="1074" fill="#ddd">7.56</text>
              <g v-for="m in marks" :key="m[0]"><rect :x="m[1]" y="1073" width="13" height="13" :fill="m[2]" /><text :x="m[1] + 0.5" y="1084" fill="#fff">{{ m[0] }}</text></g>
            </svg>
            <header class="sub"><svg width="13" height="13" viewBox="0 0 13 13"><circle cx="6.500" cy="6.500" r="6" fill="#777" /><path d="M3.500 5.500l3 3 3-3" fill="none" stroke="#222" stroke-width="1.500" /></svg><span>VOLUME: 458662</span><span>MA5: 219030</span><span class="yy">MA10: 194912</span></header>
            <svg viewBox="1784 1106 770 82">
              <g stroke="#6e0c0c" fill="none" shape-rendering="crispEdges"><path d="M1785 1147.500H2503" stroke-dasharray="1 4" /><path d="M2503.500 1088V1188M2504 1108.500h5M2504 1128.500h2M2504 1147.500h5M2504 1171.500h27v17" /></g>
              <text x="2549" y="1112" text-anchor="end" fill="#a81010">100000</text><text x="2549" y="1151" text-anchor="end" fill="#a81010">50000</text><text x="2506" y="1184" fill="#a81010">X10</text>
              <g shape-rendering="crispEdges"><template v-for="(v, i) in dayVol" :key="i">
                <rect v-if="v.up" :x="v.x - 1" :y="v.y + 0.5" width="2" :height="1186 - v.y" stroke="#c04a46" fill="#000" />
                <rect v-else :x="v.x - 1.5" :y="v.y" width="3" :height="1187 - v.y" fill="#2af0f0" />
              </template></g>
              <g fill="none" shape-rendering="crispEdges"><polyline :points="vma10" stroke="#f0e858" /><polyline :points="vma5" stroke="#fff" /></g>
            </svg>
            <header class="sub"><svg width="13" height="13" viewBox="0 0 13 13"><circle cx="6.500" cy="6.500" r="6" fill="#777" /><path d="M3.500 5.500l3 3 3-3" fill="none" stroke="#222" stroke-width="1.500" /></svg><span>MACD(12,26,9)</span><span>DIF: -0.00</span><span class="yy">DEA: -0.08</span><span class="mm">MACD: 0.16</span></header>
            <svg viewBox="1784 1207 770 99">
              <g stroke="#6e0c0c" fill="none" shape-rendering="crispEdges">
                <path d="M1785 1212.500H2503M1785 1236.500H2503M1785 1260.500H2503" stroke-dasharray="1 4" />
                <path d="M2504 1212.500h5M2504 1224.500h2M2504 1236.500h5M2504 1248.500h2M2504 1260.500h5M1784 1289.500H2554M2503.500 1289V1306" />
                <path v-for="m in months" :key="m[0]" :d="`M${m[1]}.500 1289V1305`" /><path v-for="t in shortTicks" :key="t" :d="`M${t}.500 1289v3`" />
                <rect x="2504" y="1189" width="49" height="100" stroke="#8c0808" stroke-width="2" />
              </g>
              <g fill="#a81010"><text x="2549" y="1216" text-anchor="end">2.00</text><text x="2549" y="1240" text-anchor="end">1.00</text><text x="2549" y="1264" text-anchor="end">0.00</text>
                <text x="1786" y="1302">2024年</text><text v-for="m in months" :key="m[0]" :x="m[1] + 2" y="1302">{{ m[0] }}</text></g>
              <text x="2516" y="1302" fill="#fff">日线</text>
              <g shape-rendering="crispEdges"><path v-for="(m, i) in macd" :key="i" :d="`M${m.x} 1260.500V${m.y}`" :stroke="m.v > 0 ? '#b84844' : '#48c8c8'" /></g>
              <g fill="none" shape-rendering="crispEdges"><polyline :points="dea" stroke="#f0e858" /><polyline :points="dif" stroke="#fff" /></g>
            </svg>
            <div class="strip ind"><button v-for="t in indTabs" :key="t" :class="{ hot: t === 'MACD', gold: t === '指标平台' }">{{ t }}</button><i class="fill"></i><button v-for="t in indTabsRight" :key="t" class="wide">{{ t }}</button></div>
          </section>
        </div>
      </div>
    </main>

    <div class="ticker"><span v-for="n in news" :key="n">{{ n }}</span></div>
    <footer class="status">
      <svg class="logo" width="13" height="16" viewBox="0 0 13 16"><circle cx="4" cy="8" r="7.500" fill="#7c8592" /><path d="M1 5l4 3 4-3M1 9l4 3 4-3" fill="none" stroke="#222" stroke-width="1.500" /></svg>
      <div v-for="x in indices" :key="x[0]" class="idx-group" :class="x[5]"><span>{{ x[0] }}</span><b>{{ x[1] }}</b><b class="e">{{ x[2] }}</b><b class="e">{{ x[3] }}</b><span class="amt">{{ x[4] }}</span></div>
      <svg v-for="n in 2" :key="n" class="gauge" width="50" height="14" viewBox="0 0 50 14"><rect x=".500" y=".500" width="49" height="6" fill="#111" stroke="#fff" /><path d="M11 1h13v5H11z" fill="#f00" /><path d="M25 1h10v5H25z" fill="#0a7a0a" /><path d="M37.500 0v7" stroke="#fff" /><path d="M4 10h46M4 13h46" stroke="#e00000" stroke-width="2" stroke-dasharray="6 2" /></svg>
      <svg class="chip" width="15" height="13" viewBox="0 0 15 13"><rect width="15" height="13" rx="2" fill="#7c8592" /><circle cx="7.500" cy="6.500" r="1.500" fill="#222" /><path d="M4.500 4q-1.500 2.500 0 5M10.500 4q1.500 2.500 0 5" fill="none" stroke="#222" /></svg>
      <b class="two">2</b><span class="host">北京联通主站Z80</span>
      <div class="sys">
        <svg viewBox="0 0 16 16"><path d="M3 15q-3-1-2-4 1-2 3-3 0-6 4-7 4 1 4 7 2 1 3 3 1 3-2 4z" /></svg>
        <svg viewBox="0 0 16 16" class="gap"><path d="M0 2h16v12H0z" /><path d="M1 3l7 8 7-8" fill="none" stroke="#161b24" stroke-width="1.500" /></svg>
        <svg viewBox="0 0 16 16"><rect y="1" width="16" height="14" rx="2" /><path d="M3 5h10M3 8h10M3 11.500h10" stroke="#161b24" stroke-width="1.500" stroke-dasharray="2 1" /></svg>
        <svg viewBox="0 0 16 16"><rect y="1" width="16" height="11" rx="2" /><path d="M5 15h6M8 12v3" stroke="#8590a0" stroke-width="2" /><path d="M2 7h3l2-3 2 5 2-2h3" fill="none" stroke="#161b24" /></svg>
        <svg viewBox="0 0 16 16"><path d="M2 1q-2 8 3 11 4 2 9 1zM4 12l4 3H1z" /><path d="M8 6l5-4" stroke="#8590a0" stroke-width="1.500" /></svg>
        <svg viewBox="0 0 16 16"><circle cx="8" cy="8" r="8" /><path d="M9 2L4 9h3l-1 5 6-7H8z" fill="#161b24" /></svg>
        <time>11:33:16</time>
      </div>
    </footer>
  </div>
</template>

<style>
html, body { background: #000; }
</style>

<style scoped>
* { box-sizing: border-box; }
.app { min-height: 100vh; display: flex; flex-direction: column; overflow: hidden; background: #000; color: #e4e4e4; font: 12px/16px "Noto Sans", "Noto Sans CJK SC", sans-serif; }
button, input, select { font: inherit; color: inherit; margin: 0; }
button { border: 0; background: none; padding: 0; white-space: nowrap; }
a { color: inherit; text-decoration: none; }
p, h1, ul { margin: 0; padding: 0; list-style: none; }
i { font-style: normal; }
table { border-collapse: collapse; border-spacing: 0; table-layout: fixed; width: 100%; }
th, td { padding: 0; font-weight: normal; white-space: nowrap; }
svg { display: block; overflow: visible; flex: none; }
.r { color: #e84848; } .g { color: #20b820; } .y { color: #c8c838; } .c { color: #28c8d0; } .m { color: #a818b0; } .w { color: #e4e4e4; }
.yy { color: #e8e848; } .mm { color: #d030d0; } .gg { color: #30d030; }

.top-tabs { display: flex; height: 24px; background: #31333f; border-bottom: 2px solid #5c1218; padding-left: 0; overflow: hidden; }
.top-tabs button { min-width: 50px; padding: 0 5px 0 6px; border-right: 1px solid #111; line-height: 22px; height: 22px; flex: none; }
.top-tabs button:first-child { margin-left: -7px; }
.top-tabs .on { background: #dd3434; color: #fff; }
.top-tabs .new-tab { display: flex; align-items: center; gap: 8px; padding: 0 0 0 6px; min-width: 53px; }

.main { flex: 1; display: grid; grid-template-columns: minmax(0, 1161fr) 5px minmax(0, 1388fr); }
.board { display: grid; grid-template-columns: minmax(0, 400fr) minmax(0, 733fr); gap: 11px; padding: 10px 13px 0 4px; background: #6b7a57; }
.vscroll { background: #f4f4f4; }
.vscroll i { display: block; height: 95%; background: #bdbdbd; border-radius: 0 0 3px 3px; }
.quotes { display: flex; flex-direction: column; border-left: 2px solid #4c0c0c; }

.tree-panel { background: #000; color: #fff; padding-top: 16px; }
h1 { font-size: 18px; line-height: 24px; text-align: center; }
.site { display: flex; align-items: center; gap: 12px; padding-left: 58px; height: 32px; color: #ff3; font-size: 16px; }
.site span { color: #6ff; font-size: 12px; }
.actions { display: flex; gap: 4px; padding-left: 10px; height: 25px; margin: -4px 0 5px; }
.actions button { width: 39px; height: 25px; border-radius: 5px; font-size: 14px; line-height: 24px; }
.actions svg { margin-left: 6px; }
.b-green { background: #007d00; } .b-red { background: #650a18; } .b-blue { background: #0a7ad2; }
.tree { font: 14px/20px "DejaVu Sans", "Noto Sans CJK SC", sans-serif; }
.row { display: flex; align-items: center; height: 21px; }
.row label { display: flex; align-items: center; height: 21px; white-space: nowrap; }
.row.root { padding-left: 19px; }
.exp { width: 13px; height: 13px; background: #fff; border: 1px solid #999; display: grid; place-items: center; flex: none; }
.exp::before { content: ""; width: 7px; height: 1px; background: #555; }
.dash { width: 6px; border-top: 1px dotted #999; flex: none; }
.row .g { width: 18px; height: 21px; border-left: 1px dotted #888; flex: none; }
.row .first-g { margin-left: 25px; }
.row .short-g { width: 12px; }
.row .none { border-color: transparent; }
.row .arm { width: 13px; display: flex; align-items: center; }
.row .arm::before { content: ""; width: 11px; border-top: 1px dotted #888; }
.row .arm.last { height: 11px; align-self: flex-start; align-items: flex-end; }
.row input { appearance: none; width: 13px; height: 13px; border: 1px solid #3f7dab; margin: 0; flex: none; }
.row input:checked { background: #2a8acb; border-color: #2a8acb; display: grid; place-items: center; }
.row input:checked::before { content: ""; width: 7px; height: 4px; border-left: 2px solid #fff; border-bottom: 2px solid #fff; transform: rotate(-45deg); margin-bottom: 3px; }
.folder { width: 16px; height: 13px; fill: #a3ad1c; margin: 0 4px 0 5px; }
.file { width: 11px; height: 14px; fill: #b48c18; margin: 0 7px 0 5px; }
.leaf label { min-width: 0; }
.leaf .sel { flex: 1; }
.body { display: flex; align-items: center; height: 21px; margin-left: 2px; flex: 1; }
.sel .body { background: #9932cc; }
.dup { width: 19px; height: 20px; margin-right: 4px; background: #d80f0f; border-radius: 3px; font-size: 15px; line-height: 19px; text-align: center; }
.pct { color: #f01414; font-size: 15px; text-shadow: 0 0 3px #c00; }
.body em { color: #1f5cb4; margin-left: 7px; }
.edit { display: flex; gap: 5px; align-items: center; height: 21px; background: #9932cc; padding-right: 2px; }
.edit button { width: 17px; height: 17px; border: 1px solid #b07ad0; }
.edit svg { width: 14px; height: 14px; }
.hbar { height: 5px; margin: 6px 0 0 10px; background: #c4c4c4; }

.order-panel { background: #000; color: #fff; display: flex; flex-direction: column; padding-left: 11px; }
.mode { height: 34px; display: flex; gap: 17px; font-size: 17px; line-height: 32px; }
.frame { flex: 1; border: 1px solid #777; border-bottom: 0; padding-left: 5px; }
.tools { display: flex; align-items: center; height: 34px; padding-left: 5px; gap: 2px; }
.tools button { height: 22px; width: 32px; background: #222; border-radius: 4px; }
.tools .grid-btn { width: 27px; height: 28px; background: #780000; display: grid; place-items: center; }
.sel-wrap { position: relative; color: #000; margin-right: -2px; }
.sel-wrap select { appearance: none; width: 100%; height: 24px; border: 1px solid #888; border-radius: 0; background: #fff; padding: 0 4px; font-size: 13px; }
.sel-wrap::after { content: "▼"; position: absolute; right: 5px; top: 4px; font-size: 9px; pointer-events: none; }
.w1 { width: 51px; } .w2 { width: 67px; }
.tag { margin: 0 1px 0 6px; }
.tools .tag + .pill + .tag { margin-left: 1px; }
.pill { height: 22px; line-height: 22px; padding: 0 4px; background: #222; border-radius: 4px; font-weight: 400; }
.pill.red { color: #e01818; } .pill.green { color: #0c8a0c; }
.tools2 { display: flex; align-items: center; height: 20px; padding-left: 4px; gap: 6px; font-size: 13px; }
.tools2 .arrow { width: 15px; }
.tools2 .jing { font-size: 15px; margin: 0 2px; }
.tools2 input { width: 34px; height: 20px; border: 1px solid #888; background: #fff; color: #000; padding: 0 2px; font-size: 13px; }
.tools2 button { display: flex; align-items: center; gap: 2px; height: 20px; width: 36px; padding-left: 3px; background: #fff; color: #000; }
.plot { border: 1px solid #777; margin-right: 32px; overflow: hidden; }
.plot svg, .intra > svg, .daily > svg { width: 100%; height: auto; font-size: 12px; }
.ax-o { fill: #e08a1e; } .ax-w { fill: #fff; } .ax-g { fill: #7ce890; }
.vol-title { font-size: 14px; font-weight: 700; fill: #fff; }

.top-row { display: flex; min-height: 380px; }
.watch { flex: 692 1 0; min-width: 0; display: flex; flex-direction: column; }
.related { flex: 348 1 0; min-width: 0; display: flex; flex-direction: column; border-left: 1px solid #6e1010; }
.quote { flex: 346 1 0; min-width: 0; border-left: 1px solid #6e1010; border-bottom: 1px solid #6e1010; }
.c46 { width: 46px; } .c68 { width: 68px; } .c64 { width: 64px; } .c24 { width: 24px; } .c63 { width: 63px; } .c76 { width: 76px; } .c67 { width: 67px; } .c36 { width: 36px; }
.pool, .sectors { font-size: 15px; }
.pool th, .sectors th { height: 22px; text-align: right; padding-right: 4px; line-height: 18px; vertical-align: top; }
.pool td, .sectors td { height: 23px; text-align: right; padding-right: 4px; line-height: 20px; }
.pool .l, .sectors .l { text-align: left; padding: 0 0 0 6px; }
.pool .dot, .sectors .dot { text-align: left; font-size: 10px; }
.pool .down { text-align: center; font-size: 10px; padding-left: 0; }
.pool th:first-child { text-align: left; padding-left: 4px; }
.pool th.down { text-align: center; }
.sync { display: block; width: 28px; height: 17px; margin-top: 2px; border: 1px solid #888; color: #888; font-size: 12px; line-height: 14px; }
.pool .num, .sectors .num { font-size: 16px; }
.pool .idx { text-align: center; font-size: 16px; }
.pool tbody td:not(:first-child):not(:last-child) { background: #000080; }
.pool .na { padding-right: 13px; }
.pool .flag { line-height: 10px; vertical-align: top; padding-top: 4px; }
.pool .flag i { display: block; width: 3px; height: 3px; background: #e028e0; margin-left: auto; }
.watch .strip { margin-top: auto; }
.strip { display: flex; align-items: stretch; height: 18px; background: #31333f; border-bottom: 1px solid #6e1010; overflow: hidden; color: #ddd; flex: none; }
.strip button { min-width: 36px; padding: 0 5px 0 6px; border-right: 1px solid #0c0c10; line-height: 17px; flex: none; }
.strip .nav { width: 24px; padding-left: 0; color: #999; flex: none; font-size: 10px; line-height: 17px; white-space: nowrap; overflow: hidden; }
.strip .hot { color: #e83048; }
.rel-body { display: flex; flex: 1; }
.sectors .c { text-align: center; color: #c8c8c8; padding: 0; }
.sectors th svg { display: block; margin: 2px auto 0; }
.sectors th { position: relative; }
.sectors th .sort { position: absolute; right: -9px; top: 2px; }
.sectors small { font-size: 12px; line-height: 1px; vertical-align: -2px; }
.sectors td:last-child, .sectors th:last-child { padding-right: 10px; }
.sectors { flex: 1; align-self: flex-start; }
.sb-v { width: 18px; background: #171923; padding: 1px; flex: none; display: flex; flex-direction: column; gap: 1px; }
.sb-v .thumb { height: 38px; background: #2f323d; }
.sb-v .btn, .sb-h .btn { width: 16px; height: 16px; border: 1px solid #34363f; color: #34363f; font-size: 9px; line-height: 14px; text-align: center; flex: none; }
.strip .cut { width: 24px; min-width: 0; padding-right: 0; overflow: hidden; }
.sb-h { flex: 1; display: flex; background: #171923; gap: 1px; padding-left: 1px; }
.sb-h .thumb { width: 38px; background: #2f323d; margin: 1px 0; }
.sb-h .end { margin-left: auto; }

.quote header { height: 56px; border-bottom: 1px solid #6e1010; padding: 4px 0 0 6px; }
.q-name { font-size: 16px; line-height: 20px; height: 26px; }
.q-name b { color: #ff3; font-weight: 400; font-size: 15px; }
.q-price { display: flex; gap: 8px; align-items: center; color: #e84848; font-size: 14px; line-height: 18px; }
.q-price strong { font-size: 17px; }
.seal { position: relative; display: flex; height: 91px; border-bottom: 1px solid #c8924a; padding-top: 16px; }
.seal strong { width: 115px; padding: 24px 0 0 14px; color: #f03c3c; font-size: 14px; flex: none; }
.fold { position: absolute; left: 149px; top: 0; width: 46px; height: 13px; border-radius: 0 0 7px 7px; background: #333; display: grid; place-items: center; }
.seal li { height: 18px; line-height: 18px; padding-left: 8px; position: relative; white-space: pre; }
.seal li span { margin-left: 2px; }
.seal li i { position: absolute; left: 3px; color: #aaa; }
.bids, .stats { font-size: 14px; border-bottom: 1px solid #6e1010; margin-top: 1px; }
.bids th, .stats th { text-align: left; padding-left: 7px; width: 60px; }
.bids td { height: 18px; line-height: 18px; text-align: right; }
.bids td:nth-child(2) { width: 105px; } .bids td:nth-child(3) { width: 98px; }
.stats td { height: 19px; line-height: 18px; text-align: right; }
.stats td:nth-child(2) { width: 105px; }
.stats .second { padding-left: 15px; }
.stats td:last-child { padding-right: 6px; }
.stats + .stats { border-bottom: 0; }
.boxed { outline: 1px solid #667; }

.mid-row { flex: 1; display: flex; }
.mid-row section { flex: 692 1 0; min-width: 0; display: flex; flex-direction: column; }
.mid-row section + section { border-left: 1px solid #6e1010; }
.empty { text-align: center; padding-top: 5px; }
.cap { margin-top: auto; height: 18px; padding-left: 5px; background: #31333f; line-height: 18px; }
.charts { display: flex; border-top: 2px solid #5c1010; flex: none; }
.intra { flex: 616 1 0; min-width: 0; }
.daily { flex: 770 1 0; min-width: 0; border-left: 1px solid #6e1010; }
.charts header { display: flex; align-items: center; gap: 5px; height: 18px; line-height: 18px; padding-left: 3px; white-space: nowrap; }
.daily header { gap: 7px; }
.intra header { padding-left: 56px; }
.intra .gap { margin-left: 6px; }
.daily .sub { border-top: 1px solid #6e1010; height: 19px; }
.f-r { fill: #e84848; } .f-w { fill: #fff; } .f-g { fill: #20b820; } .f-y { fill: #b8b838; }
.strip.ind { border-bottom: 0; }
.strip.ind button { min-width: 15px; padding: 0 4px; line-height: 18px; }
.strip.ind .wide { padding: 0 5px; }
.strip .gold { color: #c8c838; }
.fill { flex: 1; }

.ticker { display: flex; gap: 41px; height: 22px; background: #222830; color: #f0f0f0; font-family: "Noto Sans CJK SC", sans-serif; line-height: 23px; white-space: nowrap; overflow: hidden; flex: none; }
.ticker span { flex: none; }
.ticker span:first-child { margin-left: -8px; }
.ticker span:nth-child(4) { margin-left: 196px; }
.status { display: flex; align-items: center; height: 24px; padding-top: 4px; background: #151a22; color: #9aa0aa; overflow: hidden; white-space: nowrap; flex: none; }
.logo { margin-right: 7px; }
.idx-group { display: grid; grid-template-columns: 26px 50px 38px 48px 70px; line-height: 20px; flex: none; }
.idx-group b { font-weight: 400; }
.idx-group .e { text-align: right; }
.idx-group .amt { padding-left: 10px; }
.up b { color: #c02424; } .dn b { color: #4cc83c; }
.gauge { margin: 2px 2px 0 0; }
.gauge + .chip { margin: 0 5px 0 7px; }
.two { width: 14px; height: 13px; border-radius: 2px; background: #8a929e; color: #fff; line-height: 13px; text-align: center; margin-right: 4px; }
.sys { margin-left: auto; display: flex; align-items: center; gap: 14px; padding-right: 3px; }
.sys svg { width: 16px; height: 16px; fill: #8590a0; }
.sys .gap { margin-left: 29px; }
</style>
